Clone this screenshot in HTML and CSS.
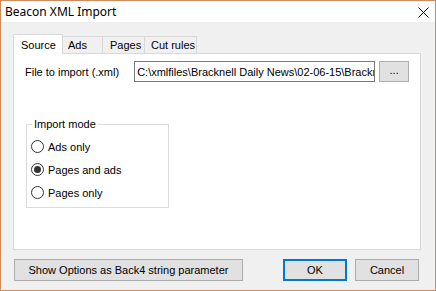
FILE: index.html
```html
<!DOCTYPE html>
<html>
<head>
<meta charset="utf-8">
<link rel="stylesheet" href="styles.css">
</head>
<body>
<div class="window">
  <div class="titlebar">
    <span class="title">Beacon XML Import</span>
    <svg class="close" width="11" height="11" viewBox="0 0 11 11"><path d="M0.5 0.5 L10.5 10.5 M10.5 0.5 L0.5 10.5" stroke="#000" stroke-width="1" fill="none"/></svg>
  </div>
  <div class="client">
    <div class="tabs">
      <div class="tab active">Source</div>
      <div class="tab t-ads">Ads</div>
      <div class="tab t-pages">Pages</div>
      <div class="tab t-cut">Cut rules</div>
    </div>
    <div class="panel">
      <div class="file-row">
        <span class="file-label">File to import (.xml)</span>
        <div class="textbox"><span class="path">C:\xmlfiles\Bracknell Daily News\02-06-15\Bracknell</span></div>
        <div class="btn browse">...</div>
      </div>
      <fieldset class="group">
        <legend>Import mode</legend>
        <div class="radio"><span class="dot"></span>Ads only</div>
        <div class="radio"><span class="dot checked"></span>Pages and ads</div>
        <div class="radio"><span class="dot"></span>Pages only</div>
      </fieldset>
    </div>
    <div class="footer">
      <div class="btn show">Show Options as Back4 string parameter</div>
      <div class="spacer"></div>
      <div class="btn ok">OK</div>
      <div class="btn cancel">Cancel</div>
    </div>
  </div>
</div>
</body>
</html>
```
FILE: styles.css
```css
* { box-sizing: border-box; }
html, body { margin: 0; padding: 0; }
body { width: 436px; height: 291px; overflow: hidden; background: #f0f0f0; }
.window {
  width: 436px; height: 291px;
  border: 1px solid #d08b5d;
  background: #f0f0f0;
  display: flex; flex-direction: column;
  font-family: "Liberation Sans", Arial, sans-serif;
  font-size: 11px; color: #000;
}
.titlebar {
  height: 21px; background: #fff;
  display: flex; align-items: center;
  padding-left: 4px; padding-right: 6px;
}
.title { font-family: "Noto Sans", "Open Sans", sans-serif; font-size: 12px; flex: 1; }
.close { margin-top: 1px; }
.client { flex: 1; padding: 12px 14px 0 12px; display: flex; flex-direction: column; }
.tabs { display: flex; align-items: flex-end; height: 19px; }
.tab {
  height: 17px; border: 1px solid #d9d9d9; border-bottom: none;
  background: #f0f0f0; display: flex; align-items: center;
  margin-left: -1px;
}
.tab.active { height: 20px; background: #fff; margin-left: 0; padding-left: 7px; width: 50px; position: relative; z-index: 1; margin-bottom: -1px; }
.t-ads { width: 41px; padding-left: 5px; }
.t-pages { width: 43px; padding-left: 7px; }
.t-cut { width: 53px; padding-left: 6px; }
.panel {
  width: 408px; height: 197px;
  background: #fff; border: 1px solid #d9d9d9;
  padding: 7px 11px 0 11px;
}
.file-row { display: flex; align-items: center; height: 21px; }
.file-label { width: 110px; }
.textbox {
  width: 243px; height: 21px; border: 1px solid #7a7a7a; background: #fff;
  overflow: hidden; white-space: nowrap; padding-left: 2px;
  display: flex; align-items: center;
}
.path { display: block; width: 237px; overflow: hidden; white-space: nowrap; flex: none; }
.btn {
  background: #e1e1e1; border: 1px solid #adadad;
  display: flex; align-items: center; justify-content: center;
  white-space: nowrap;
}
.browse { width: 30px; height: 21px; margin-left: 4px; padding-bottom: 3px; }
.group {
  margin: 36px 0 0 1px; width: 143px; height: 90px;
  border: 1px solid #dcdcdc; padding: 0 0 0 5px;
}
.group legend { padding: 0 2px; font-size: 11px; margin-left: 0; line-height: 13px; }
.radio { display: flex; align-items: center; height: 23px; margin-left: -1px; }
.radio:first-of-type { margin-top: 4px; }
.dot {
  width: 13px; height: 13px; border-radius: 50%;
  border: 1px solid #333; background: #fff; margin-right: 4px;
  display: flex; align-items: center; justify-content: center;
}
.dot.checked::after { content: ""; width: 7px; height: 7px; border-radius: 50%; background: #333; }
.footer { display: flex; margin-top: 9px; height: 22px; padding-left: 1px; padding-right: 2px; }
.show { width: 229px; height: 22px; }
.spacer { flex: 1; }
.ok { width: 64px; height: 22px; border: 2px solid #0078d7; margin-right: 8px; }
.cancel { width: 64px; height: 22px; }
```
